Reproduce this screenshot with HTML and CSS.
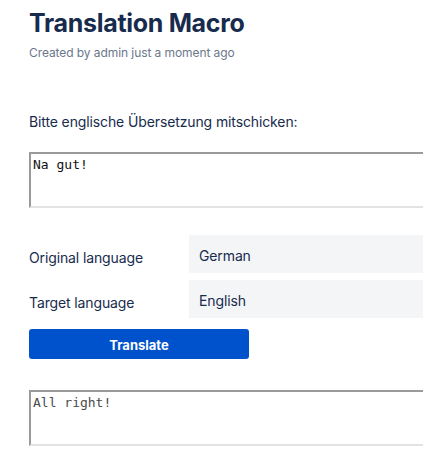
FILE: index.html
```html
<!DOCTYPE html>
<html lang="de">
<head>
<meta charset="utf-8">
<title>Translation Macro</title>
<link rel="stylesheet" href="styles.css">
</head>
<body>
<main class="page">
  <h1 class="title">Translation Macro</h1>
  <p class="meta">Created by admin just a moment ago</p>
  <p class="prompt">Bitte englische Übersetzung mitschicken:</p>
  <textarea class="box src">Na gut!</textarea>
  <div class="langs">
    <div class="lab">Original language</div>
    <div class="val">German</div>
    <div class="lab">Target language</div>
    <div class="val">English</div>
  </div>
  <button class="btn" type="button">Translate</button>
  <textarea class="box out" readonly>All right!</textarea>
</main>
</body>
</html>
```
FILE: styles.css
```css
html, body {
  margin: 0;
  padding: 0;
  overflow: hidden;
  background: #ffffff;
}
body {
  font-family: Inter, "Liberation Sans", Arial, sans-serif;
  color: #172B4D;
}
.page {
  padding: 7px 0 0 29px;
  display: flex;
  flex-direction: column;
  align-items: flex-start;
}
.title {
  margin: 0;
  font-size: 25px;
  line-height: 32px;
  font-weight: 700;
  letter-spacing: -0.3px;
  color: #172B4D;
}
.meta {
  margin: 6px 0 0;
  font-size: 12px;
  line-height: 16px;
  letter-spacing: -0.08px;
  color: #6B778C;
}
.prompt {
  margin: 51px 0 0;
  font-size: 14px;
  line-height: 20px;
  letter-spacing: -0.12px;
  color: #172B4D;
}
.box {
  display: block;
  box-sizing: border-box;
  width: 398px;
  height: 56px;
  margin: 20px 0 0;
  padding: 3px 2px;
  border-style: solid;
  border-width: 2px;
  border-color: #9a9a9a #e3e3e3 #e3e3e3 #9a9a9a;
  background: #ffffff;
  font-family: "DejaVu Sans Mono", "Liberation Mono", monospace;
  font-size: 13px;
  line-height: 15px;
  color: #111111;
  resize: none;
  outline: none;
}
.out {
  margin-top: 31px;
  color: #4a4a4a;
}
.langs {
  margin-top: 27px;
  width: 398px;
  display: grid;
  grid-template-columns: 160px 1fr;
  row-gap: 7px;
}
.lab {
  height: 38px;
  box-sizing: border-box;
  padding-top: 8px;
  line-height: 30px;
  font-size: 14px;
  letter-spacing: -0.12px;
  color: #172B4D;
}
.val {
  height: 38px;
  box-sizing: border-box;
  padding: 3px 10px 0;
  line-height: 35px;
  font-size: 14px;
  letter-spacing: -0.12px;
  background: #F4F5F7;
  color: #172B4D;
}
.btn {
  margin-top: 11px;
  width: 220px;
  height: 30px;
  box-sizing: border-box;
  padding: 3px 0 0;
  border: none;
  border-radius: 3px;
  background: #0052CC;
  color: #ffffff;
  font-family: Inter, "Liberation Sans", Arial, sans-serif;
  font-size: 13px;
  font-weight: 700;
  line-height: 27px;
  text-align: center;
}
```
